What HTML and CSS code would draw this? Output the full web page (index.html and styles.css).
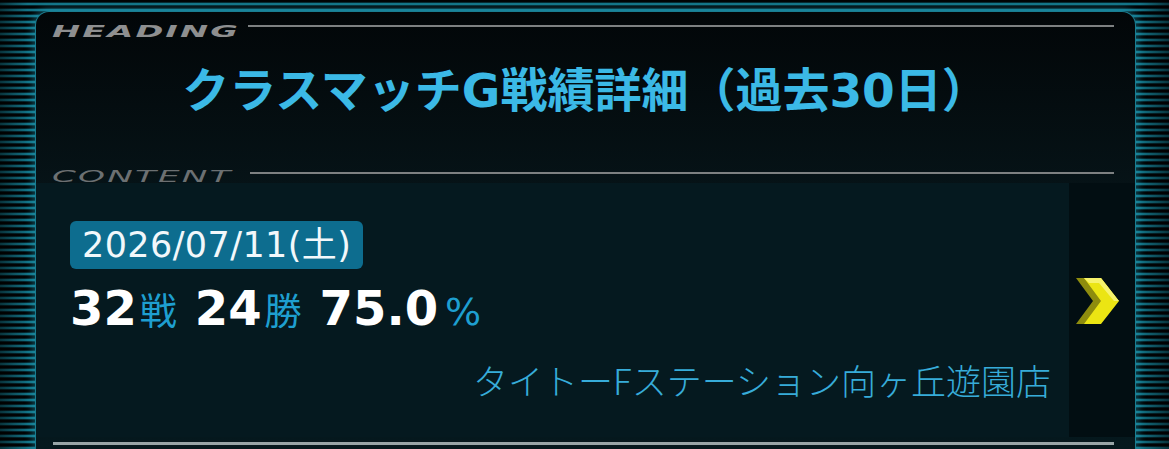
FILE: index.html
```html
<!DOCTYPE html>
<html lang="ja">
<head>
  <meta charset="UTF-8" />
  <meta name="viewport" content="width=device-width, initial-scale=1.0" />
  <title>クラスマッチG戦績詳細</title>
  <link rel="stylesheet" href="styles.css">
</head>
<body>
  <div class="frame">
    <section class="card">
      <div class="label-row">
        <span class="label label-heading"><span>HEADING</span></span>
        <span class="rule"></span>
      </div>
      <h1 class="title">クラスマッチG戦績詳細（過去30日）</h1>

      <div class="label-row label-content">
        <span class="label"><span>CONTENT</span></span>
        <span class="rule"></span>
      </div>

      <a class="record" href="#">
        <div class="record-body">
          <span class="date">2026/07/11(土)</span>
          <p class="stats">
            <b>32</b><small>戦</small>
            <b>24</b><small>勝</small>
            <b>75.0</b><small class="pct">%</small>
          </p>
          <p class="shop">タイトーFステーション向ヶ丘遊園店</p>
        </div>
        <div class="record-arrow">
          <!-- 黄色の矢印（奥が影、手前がハイライト） -->
          <svg width="46" height="50" viewBox="0 0 46 50">
            <polygon points="2,2 19,2 38,25 19,48 2,48 19,25" fill="#8e8c0e" />
            <polygon points="10,2 27,2 45,25 27,48 10,48 27,25" fill="#ebe513" />
            <polygon points="10,2 27,2 45,25 40,25 25,7 15,7" fill="#f7f36c" />
          </svg>
        </div>
      </a>

      <div class="rule rule-bottom"></div>
    </section>
  </div>
</body>
</html>
```

FILE: styles.css
```css
:root {
  --cyan: #3bb9e6;
  --cyan-dark: #1e9fd0;
  --panel: #05191f;
  --latin: "DejaVu Sans", "Noto Sans CJK JP", sans-serif;
  --jp: "Noto Sans CJK JP", sans-serif;
}

* {
  box-sizing: border-box;
  margin: 0;
  padding: 0;
}

body {
  width: 1169px;
  height: 449px;
  overflow: hidden;
  font-family: var(--latin);
  background:
    linear-gradient(to right,
      rgba(0, 0, 0, 0.55) 0, rgba(0, 0, 0, 0) 28px,
      rgba(0, 0, 0, 0) 1140px, rgba(0, 0, 0, 0.55) 100%),
    repeating-linear-gradient(to bottom,
      #010304 0, #010304 2px,
      #0a4c5a 3px, #1d98b0 4px, #0a4c5a 5px,
      #010304 6px);
}

.frame {
  height: 100%;
  padding: 11px 33px 0 35px;
}

.card {
  height: 100%;
  border: 1px solid #1a7d90;
  border-bottom: none;
  border-radius: 14px 14px 0 0;
  background: linear-gradient(to bottom, #020608 0%, #061317 40%, #05181d 100%);
  box-shadow: 0 0 8px 2px rgba(40, 180, 210, 0.45);
  padding: 10px 0 0;
}

/* HEADING / CONTENT の見出しと横線 */
.label-row {
  display: flex;
  align-items: flex-start;
  height: 16px;
  padding: 0 21px 0 16px;
}

.label {
  flex: none;
  width: 196px;
  height: 16px;
}

.label span {
  display: inline-block;
  font-family: "DejaVu Sans", sans-serif;
  font-style: italic;
  font-weight: bold;
  font-size: 16px;
  line-height: 16px;
  letter-spacing: 1px;
  color: #8e8f90;
  transform: scaleX(2.1);
  transform-origin: left center;
}

.label-row .rule {
  flex: 1;
  height: 2px;
  margin-top: 3px;
  background: #7d8081;
}

.label-content {
  margin-top: 46px;
}

.label-content .label {
  width: 198px;
}

.label-content .label span {
  font-weight: normal;
  color: #6c7072;
  transform: scaleX(2.14);
}

.label-content .rule {
  margin-top: 5px;
}

.title {
  font-family: var(--latin);
  text-align: center;
  font-size: 47px;
  font-weight: 700;
  line-height: 60px;
  color: var(--cyan);
  margin-top: 23px;
}

/* 戦績カード */
.record {
  display: flex;
  text-decoration: none;
  height: 254px;
}

.record-body {
  flex: 1;
  display: flex;
  flex-direction: column;
  align-items: flex-start;
  background: var(--panel);
  padding: 38px 18px 0 34px;
}

.date {
  background: #0d6d8f;
  border-radius: 6px;
  color: #f2f8fb;
  font-size: 35px;
  line-height: 48px;
  letter-spacing: 0.4px;
  padding: 0 12px;
}

.stats {
  display: flex;
  align-items: baseline;
  margin-top: 10px;
  line-height: 58px;
}

.stats b {
  font-size: 48px;
  font-weight: 700;
  color: #fff;
}

.stats small {
  font-family: var(--jp);
  font-size: 37px;
  color: var(--cyan-dark);
  margin: 0 18px 0 3px;
}

.stats .pct {
  font-family: var(--latin);
  font-size: 38px;
  margin-left: 7px;
}

.shop {
  align-self: stretch;
  text-align: right;
  font-family: var(--jp);
  font-size: 35px;
  font-weight: 300;
  line-height: 40px;
  color: #37acd9;
  margin-top: 19px;
}

.record-arrow {
  width: 66px;
  display: flex;
  align-items: center;
  justify-content: center;
  background: #020e12;
  padding: 0 10px 18px 0;
}

.rule-bottom {
  height: 3px;
  margin: 5px 21px 0 17px;
  background: #98a5a7;
}
```
